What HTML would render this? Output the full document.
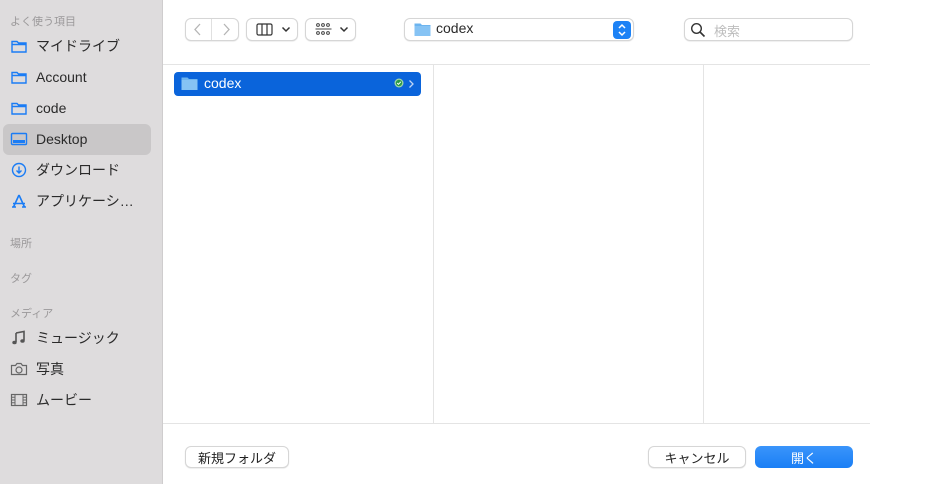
<!DOCTYPE html>
<html><head><meta charset="utf-8">
<style>
*{margin:0;padding:0;box-sizing:border-box}
body{width:930px;height:484px;background:#fff;position:relative;overflow:hidden;font-family:"Liberation Sans","Noto Sans CJK JP",sans-serif;color:#222}
.sb{position:absolute;left:0;top:0;width:163px;height:484px;background:#dedcdd;border-right:1px solid #cfcdce}
.sec{position:absolute;left:10px;font-size:11px;color:#9b999a}
.it{position:absolute;left:10px;font-size:14px;color:#2a2a2a;display:flex;align-items:center;height:20px}
.it svg{width:18px;height:16px;margin-right:8px}
.sel{position:absolute;left:3px;top:124px;width:148px;height:31px;background:#c9c7c8;border-radius:6px}
.btn{position:absolute;background:#fff;border:1px solid #d6d6d6;border-radius:6px;box-shadow:0 0.5px 1px rgba(0,0,0,.12)}
.line{position:absolute;background:#e4e4e4}
.pb{position:absolute;font-size:13px;display:flex;align-items:center;justify-content:center;border-radius:6px}
</style></head><body>
<div class="sb">
<div class="sec" style="top:13px">よく使う項目</div>
<div class="sel"></div>
<div class="it" style="top:36px"><svg viewBox="0 0 18 16"><path d="M2 3.5h5l1.5 1.5H16v9H2z M2 6.5h14" fill="none" stroke="#1a7cf5" stroke-width="1.4"/></svg>マイドライブ</div>
<div class="it" style="top:67px"><svg viewBox="0 0 18 16"><path d="M2 3.5h5l1.5 1.5H16v9H2z M2 6.5h14" fill="none" stroke="#1a7cf5" stroke-width="1.4"/></svg>Account</div>
<div class="it" style="top:98px"><svg viewBox="0 0 18 16"><path d="M2 3.5h5l1.5 1.5H16v9H2z M2 6.5h14" fill="none" stroke="#1a7cf5" stroke-width="1.4"/></svg>code</div>
<div class="it" style="top:129px"><svg viewBox="0 0 18 16"><rect x="1.5" y="2.5" width="15" height="11" rx="1" fill="none" stroke="#1a7cf5" stroke-width="1.4"/><rect x="3" y="9" width="12" height="3" fill="#1a7cf5"/></svg>Desktop</div>
<div class="it" style="top:160px"><svg viewBox="0 0 18 16"><circle cx="9" cy="8" r="6.5" fill="none" stroke="#1a7cf5" stroke-width="1.4"/><path d="M9 4.5v6M6.5 8.5L9 11l2.5-2.5" fill="none" stroke="#1a7cf5" stroke-width="1.4"/></svg>ダウンロード</div>
<div class="it" style="top:191px"><svg viewBox="0 0 18 16"><path d="M9 2L3.5 14M9 2l5.5 12M3 10.5h12M2 14h4M12 14h4" fill="none" stroke="#1a7cf5" stroke-width="1.6"/></svg>アプリケーシ…</div>
<div class="sec" style="top:235px">場所</div>
<div class="sec" style="top:270px">タグ</div>
<div class="sec" style="top:305px">メディア</div>
<div class="it" style="top:328px"><svg viewBox="0 0 18 16"><path d="M6 3l8-1.5v9" fill="none" stroke="#555" stroke-width="1.6"/><path d="M6 3v9" stroke="#555" stroke-width="1.6"/><ellipse cx="4.5" cy="12.5" rx="2.2" ry="1.8" fill="#555"/><ellipse cx="12.5" cy="11" rx="2.2" ry="1.8" fill="#555"/></svg>ミュージック</div>
<div class="it" style="top:359px"><svg viewBox="0 0 18 16"><path d="M1.5 4.5h4l1.5-2h4l1.5 2h4v9h-15z" fill="none" stroke="#666" stroke-width="1.2"/><circle cx="9" cy="9" r="3" fill="none" stroke="#666" stroke-width="1.2"/></svg>写真</div>
<div class="it" style="top:390px"><svg viewBox="0 0 18 16"><rect x="1.5" y="2.5" width="15" height="11" fill="none" stroke="#666" stroke-width="1.2"/><path d="M5 2.5v11M13 2.5v11M1.5 8h3.5M13 8h3.5M1.5 5.2h3.5M1.5 10.8h3.5M13 5.2h3.5M13 10.8h3.5" stroke="#666" stroke-width="1"/></svg>ムービー</div>
</div>

<div class="btn" style="left:185px;top:18px;width:54px;height:23px"></div>
<div style="position:absolute;left:211px;top:19px;width:1px;height:21px;background:#e0e0e0"></div>
<svg style="position:absolute;left:192px;top:22px" width="12" height="15"><path d="M8 2L3 7.5 8 13" fill="none" stroke="#b5b5b5" stroke-width="1.3"/></svg>
<svg style="position:absolute;left:220px;top:22px" width="12" height="15"><path d="M4 2l5 5.5L4 13" fill="none" stroke="#b5b5b5" stroke-width="1.3"/></svg>
<div class="btn" style="left:246px;top:18px;width:52px;height:23px"></div>
<svg style="position:absolute;left:256px;top:23px" width="18" height="13"><rect x="1" y="1" width="15" height="11" rx="1.5" fill="none" stroke="#333" stroke-width="1.2"/><path d="M6 1v11M11 1v11" stroke="#333" stroke-width="1.2"/></svg>
<svg style="position:absolute;left:281px;top:26px" width="10" height="7"><path d="M1.5 1.5L5 5 8.5 1.5" fill="none" stroke="#333" stroke-width="1.5"/></svg>
<div class="btn" style="left:305px;top:18px;width:51px;height:23px"></div>
<svg style="position:absolute;left:315px;top:22px" width="17" height="15"><g fill="none" stroke="#444" stroke-width="1"><circle cx="3" cy="3" r="1.4"/><circle cx="8" cy="3" r="1.4"/><circle cx="13" cy="3" r="1.4"/><circle cx="3" cy="11" r="1.4"/><circle cx="8" cy="11" r="1.4"/><circle cx="13" cy="11" r="1.4"/></g><path d="M0.5 7h16" stroke="#444" stroke-width="1"/></svg>
<svg style="position:absolute;left:339px;top:26px" width="10" height="7"><path d="M1.5 1.5L5 5 8.5 1.5" fill="none" stroke="#333" stroke-width="1.5"/></svg>

<div class="btn" style="left:404px;top:18px;width:230px;height:23px"></div>
<svg style="position:absolute;left:414px;top:22px" width="17" height="15"><path d="M0.5 1.5h6l1.5 1.5h8.5v11h-16z" fill="#6cb4ef"/><rect x="0.5" y="4" width="16" height="10" fill="#86c3f4"/></svg>
<div style="position:absolute;left:436px;top:20px;font-size:14px;color:#2a2a2a">codex</div>
<div style="position:absolute;left:613px;top:21px;width:18px;height:18px;background:#1d82f5;border-radius:4px"></div>
<svg style="position:absolute;left:616px;top:22px" width="12" height="16"><path d="M3 6l3-3 3 3M3 10l3 3 3-3" fill="none" stroke="#fff" stroke-width="1.5"/></svg>

<div class="btn" style="left:684px;top:18px;width:169px;height:23px"></div>
<svg style="position:absolute;left:690px;top:22px" width="16" height="16"><circle cx="6.5" cy="6.5" r="4.8" fill="none" stroke="#333" stroke-width="1.4"/><path d="M10 10l4.5 4.5" stroke="#333" stroke-width="1.6"/></svg>
<div style="position:absolute;left:714px;top:21px;font-size:13px;color:#bdbdbd">検索</div>

<div class="line" style="left:163px;top:64px;width:707px;height:1px"></div>
<div class="line" style="left:433px;top:65px;width:1px;height:358px"></div>
<div class="line" style="left:703px;top:65px;width:1px;height:358px"></div>
<div class="line" style="left:163px;top:423px;width:707px;height:1px"></div>

<div style="position:absolute;left:174px;top:72px;width:247px;height:24px;background:#0a64db;border-radius:4px"></div>
<svg style="position:absolute;left:181px;top:76px" width="17" height="15"><path d="M0.5 1.5h6l1.5 1.5h8.5v11h-16z" fill="#6cb4ef"/><rect x="0.5" y="4" width="16" height="10" fill="#86c3f4"/></svg>
<div style="position:absolute;left:204px;top:75px;font-size:14px;color:#fff">codex</div>
<svg style="position:absolute;left:394px;top:78px" width="10" height="10"><circle cx="5" cy="5" r="4.5" fill="#9fd6a8"/><circle cx="5" cy="5" r="3.2" fill="#2b9b48"/><path d="M3.2 5l1.3 1.3 2.3-2.5" fill="none" stroke="#fff" stroke-width="1"/></svg>
<svg style="position:absolute;left:408px;top:79px" width="7" height="10"><path d="M1.5 1.5L5 5 1.5 8.5" fill="none" stroke="#bcd4f5" stroke-width="1.3"/></svg>

<div class="btn pb" style="left:185px;top:446px;width:104px;height:22px">新規フォルダ</div>
<div class="btn pb" style="left:648px;top:446px;width:98px;height:22px">キャンセル</div>
<div class="pb" style="left:755px;top:446px;width:98px;height:22px;background:linear-gradient(#3a95fb,#1a7ff5);color:#fff">開く</div>
</body></html>
